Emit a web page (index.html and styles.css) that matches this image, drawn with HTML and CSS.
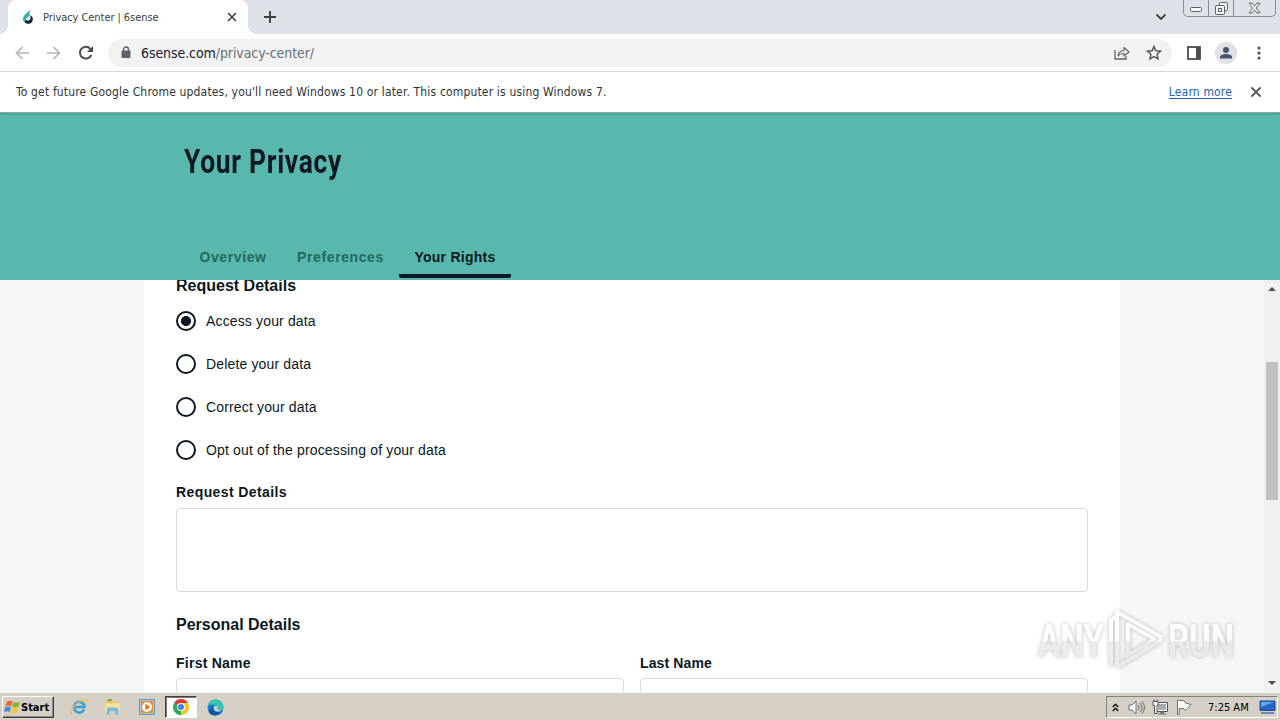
FILE: index.html
```html
<!DOCTYPE html>
<html lang="en">

<head>
  <meta charset="UTF-8">
  <meta name="viewport" content="width=device-width, initial-scale=1.0">
  <title>Privacy Center | 6sense</title>
  <link rel="stylesheet" href="styles.css">
</head>

<body>
  <div class="screen">
    <!-- tab strip -->
    <div class="tabstrip">
      <div class="tab-edge left"></div>
      <div class="tab">
        <svg class="favicon" width="12" height="16" viewBox="0 0 12 16">
          <path d="M8.500 1C4 4 .8 7 1 10.500c.2 1.500 1 2.500 2 3.200C3.300 10 5 8.500 8 6.500 7.300 5 7.500 3 8.500 1z" fill="#31b5a5"/>
          <path d="M3 13.700C5 15.500 9 15 10.300 12.500 11.700 9.500 10.500 7 8 6.500c1 2 .7 3.500-.6 4.500-1.400 1-3 .5-4-.5z" fill="#14213a"/>
        </svg>
        <span class="tab-title">Privacy Center | 6sense</span>
        <svg width="10" height="10" viewBox="0 0 10 10"><path d="M1 1l8 8M9 1L1 9" stroke="#3c4043" stroke-width="1.600"/></svg>
      </div>
      <div class="tab-edge right"></div>
      <svg class="new-tab" width="12" height="12" viewBox="0 0 12 12"><path d="M6 0v12M0 6h12" stroke="#3c4043" stroke-width="1.900"/></svg>
      <svg class="tab-search" width="12" height="8" viewBox="0 0 12 8"><path d="M1.500 1.500L6 6l4.500-4.500" fill="none" stroke="#3c4043" stroke-width="1.800"/></svg>
      <div class="win-buttons">
        <span class="win-btn"><svg width="13" height="6" viewBox="0 0 13 6"><rect x=".5" y=".5" width="11" height="4" rx="1" fill="#f5f6f8" stroke="#5c6068"/></svg></span>
        <span class="win-btn"><svg width="13" height="13" viewBox="0 0 13 13"><g fill="#f2f3f6" stroke="#5c6068"><rect x="4.500" y=".5" width="8" height="8" rx="1"/><rect x=".5" y="3.500" width="9" height="9" rx="1"/><rect x="3.500" y="6.500" width="3" height="3"/></g></svg></span>
        <span class="win-btn close"><svg width="13" height="12" viewBox="0 0 13 12"><path d="M1 1h3l2.500 3L9 1h3L8.300 6l3.700 5H9L6.500 8 4 11H1l3.700-5z" fill="#f5f6f8" stroke="#5c6068"/></svg></span>
      </div>
    </div>

    <!-- toolbar -->
    <div class="toolbar">
      <svg class="back" width="14" height="14" viewBox="0 0 14 14"><path d="M14 7H1.500M7.500 1l-6 6 6 6" fill="none" stroke="#b4b5b7" stroke-width="1.700"/></svg>
      <svg class="forward" width="14" height="14" viewBox="0 0 14 14"><path d="M0 7h12.500M6.500 1l6 6-6 6" fill="none" stroke="#b4b5b7" stroke-width="1.700"/></svg>
      <svg class="reload" width="16" height="16" viewBox="0 0 16 16"><path d="M13.300 10a5.900 5.900 0 1 1-1-6.200L14 5.500" fill="none" stroke="#494c50" stroke-width="2"/><path d="M15 1v6H9z" fill="#494c50"/></svg>
      <div class="omnibox">
        <svg class="lock" width="10" height="13" viewBox="0 0 10 13"><path d="M2.500 5V3.500a2.500 2.500 0 0 1 5 0V5" fill="none" stroke="#5f6368" stroke-width="1.400"/><rect x="0.500" y="4.500" width="9" height="7.500" rx="1" fill="#5f6368"/></svg>
        <span class="url"><b>6sense.com</b>/privacy-center/</span>
        <svg class="share" width="16" height="14" viewBox="0 0 16 14"><path d="M1 4v9h11v-3" fill="none" stroke="#5f6368" stroke-width="1.300"/><path d="M4 10c.4-3.600 2.500-5.300 6-5.500V1.500L15 6l-5 4V7.500C7.500 7.400 5.500 8 4 10z" fill="none" stroke="#5f6368" stroke-width="1.200" stroke-linejoin="round"/></svg>
        <svg class="star" width="16" height="15" viewBox="0 0 16 15"><path d="M8 1.500l1.900 4.200 4.600.5-3.400 3.100.9 4.500L8 11.500l-4 2.300.9-4.500L1.500 6.200l4.600-.5z" fill="none" stroke="#53565a" stroke-width="1.500"/></svg>
      </div>
      <svg class="panel" width="14" height="14" viewBox="0 0 14 14"><rect x="1" y="1" width="12" height="12" fill="#fff" stroke="#4b4e52" stroke-width="1.800"/><path d="M9 1h4v12H9z" fill="#4b4e52"/></svg>
      <svg class="profile" width="22" height="22" viewBox="0 0 22 22"><circle cx="11" cy="11" r="11" fill="#dfe1e5"/><circle cx="11" cy="8" r="3" fill="#47536c"/><path d="M5 16.500v-1.500c0-4 12-4 12 0v1.500z" fill="#47536c"/></svg>
      <svg class="menu" width="4" height="14" viewBox="0 0 4 14"><g fill="#4b4e52"><circle cx="2" cy="2" r="1.600"/><circle cx="2" cy="7" r="1.600"/><circle cx="2" cy="12" r="1.600"/></g></svg>
    </div>

    <!-- update notice -->
    <div class="infobar">
      <span class="notice">To get future Google Chrome updates, you'll need Windows 10 or later. This computer is using Windows 7.</span>
      <a class="learn">Learn more</a>
      <svg width="12" height="12" viewBox="0 0 12 12"><path d="M1.500 1.500l9 9M10.500 1.500l-9 9" stroke="#55585c" stroke-width="1.800"/></svg>
    </div>

    <!-- page -->
    <div class="page-header">
      <h1>Your Privacy</h1>
      <div class="nav">
        <span class="nav-item overview">Overview</span>
        <span class="nav-item preferences">Preferences</span>
        <span class="nav-item rights active">Your Rights</span>
      </div>
    </div>
    <div class="page">
      <div class="card">
        <h2 class="first">Request Details</h2>
        <div class="options">
          <div class="option"><span class="radio checked"></span><span>Access your data</span></div>
          <div class="option"><span class="radio"></span><span>Delete your data</span></div>
          <div class="option"><span class="radio"></span><span>Correct your data</span></div>
          <div class="option"><span class="radio"></span><span>Opt out of the processing of your data</span></div>
        </div>
        <div class="label">Request Details</div>
        <div class="textarea"></div>
        <h2 class="personal">Personal Details</h2>
        <div class="names">
          <div><div class="label first-name">First Name</div><div class="input"></div></div>
          <div><div class="label last-name">Last Name</div><div class="input"></div></div>
        </div>
      </div>
      <div class="scrollbar">
        <svg width="8" height="4" viewBox="0 0 8 4"><path d="M0 4l4-4 4 4z" fill="#505050"/></svg>
        <div class="thumb"></div>
        <svg class="down" width="8" height="4" viewBox="0 0 8 4"><path d="M0 0l4 4 4-4z" fill="#505050"/></svg>
      </div>
    </div>

    <!-- taskbar -->
    <div class="taskbar">
      <div class="start">
        <svg width="17" height="16" viewBox="0 0 17 16">
          <path d="M3 2.500c2-1.300 4-1 5.500 0L7.200 7.300c-2-1-3.500-1-5.700 0z" fill="#ef6429"/>
          <path d="M9.500 3c2 1 4 1 6.500-.3l-1.400 4.800c-2 1.300-4.200 1.200-6.300.2z" fill="#83b735"/>
          <path d="M1.300 8.200c2-1 4-1 5.600 0L5.600 13c-2-1-3.600-1-5.600 0z" fill="#398bdc"/>
          <path d="M8 8.600c2 1 4 1 6.400-.2L13 13.200c-2.300 1.300-4.300 1.200-6.300.2z" fill="#f8c334"/>
        </svg>
        <span>Start</span>
      </div>
      <div class="quick">
        <svg width="18" height="18" viewBox="0 0 18 18">
          <path d="M14 11.500A5.300 5.300 0 1 1 14.500 9H5" fill="none" stroke="#3a9fdd" stroke-width="2.700"/>
          <path d="M2 15.500C-1 18 2 7 11 3c5-2.300 7-1 5 2" fill="none" stroke="#eebd43" stroke-width="1.300"/>
        </svg>
      </div>
      <div class="quick">
        <svg width="18" height="18" viewBox="0 0 18 18">
          <path d="M2 2h6l1 2h6v9H2z" fill="#e5bf60"/>
          <path d="M4 1h4v2H4z" fill="#6fac58"/>
          <path d="M1.500 5h14v8h-14z" fill="#f7e29b"/>
          <path d="M3 16.500V11q0-1.500 1.500-1.500h8q1.500 0 1.500 1.500v5.500h-2.500V13h-6v3.500z" fill="#6dbbe1"/>
        </svg>
      </div>
      <div class="quick">
        <svg width="18" height="18" viewBox="0 0 18 18">
          <rect x="1.500" y="1.500" width="15" height="15" fill="#a6cbe7" stroke="#5e98c5"/>
          <rect x="3" y="3" width="12" height="12" fill="#ee8b23"/>
          <circle cx="9" cy="9" r="5" fill="#fff"/>
          <path d="M7.300 5.800L12.500 9l-5.200 3.200z" fill="#e87512"/>
        </svg>
      </div>
      <div class="quick pressed">
        <svg width="16" height="16" viewBox="0 0 16 16">
          <path d="M8 8l6.930-4A8 8 0 0 1 8 16z" fill="#fcc31e"/>
          <path d="M8 8v8A8 8 0 0 1 1.070 4z" fill="#2da94f"/>
          <path d="M8 4h6.930L11.500 10z" fill="#fcc31e"/>
          <path d="M1.070 4A8 8 0 0 1 14.930 4H8v4z" fill="#e33b2e"/>
          <path d="M11.460 10L8 16V12z" fill="#fcc31e"/>
          <circle cx="8" cy="8" r="4" fill="#fff"/>
          <circle cx="8" cy="8" r="3" fill="#4080ef"/>
        </svg>
      </div>
      <div class="quick">
        <svg width="17" height="17" viewBox="0 0 17 17">
          <circle cx="8.500" cy="8.500" r="8" fill="#1681cc"/>
          <path d="M.8 7C2 1 8-.8 12.500 1.700 16 3.500 17.500 8 15.500 10.500c-2 2-5.500 1-5-1C12 6 5 4 .8 7z" fill="#39c3b1"/>
          <path d="M5.500 8c-.5 5 4 6 9.500 4.300C12 17 5 18 2 13.500 2 10.500 3.500 9 5.500 8z" fill="#0f549d"/>
          <path d="M7 8c1-2 4-1.500 3.500 1-.5 1.500.5 2.700 4 2.500-2 2-8.500 1.500-7.500-3.500z" fill="#d6d1c8"/>
        </svg>
      </div>
      <div class="tray">
        <svg class="chev" width="7" height="9" viewBox="0 0 7 9"><path d="M.8 4L3.500 1.200 6.200 4M.8 8l2.700-2.800L6.200 8" fill="none" stroke="#111" stroke-width="1.400"/></svg>
        <svg class="speaker" width="17" height="15" viewBox="0 0 17 15"><path d="M1 5h3l4-4v13l-4-4H1z" fill="#fff" stroke="#707070"/><path d="M10 5q2 2.500 0 5M12 3q4 4.500 0 9M14 1.500q5 6 0 12" fill="none" stroke="#777" stroke-width="1.100"/></svg>
        <svg class="network" width="17" height="16" viewBox="0 0 17 16"><path d="M4.500 3.500h11v9h-11z" fill="#aaa" stroke="#555"/><path d="M5.500 4.500h9v7h-9z" fill="none" stroke="#fff"/><path d="M8 13h4v1.500h2v1H6v-1h2z" fill="#777"/><path d="M1 2.500h5v4H5v8H2.500v-8H1zM2 .5v2M5 .5v2" fill="#fff" stroke="#555"/></svg>
        <svg class="flag" width="16" height="16" viewBox="0 0 16 16"><path d="M1.500 1v14.500h1.700V9.500h4.500l1 1.500c2-.2 3.300-1.500 6.300-5.500L9.500 4 8.200 1.500H3.200V1z" fill="#fff" stroke="#707070"/></svg>
        <span class="clock">7:25 AM</span>
        <svg width="17" height="14" viewBox="0 0 17 14"><path d="M1 1h15v9.500H1z" fill="#2267c7" stroke="#234e8b"/><path d="M2 2h13L2 7z" fill="#62a7eb"/><path d="M2 13h13" stroke="#4a72aa" stroke-width="1.500"/></svg>
      </div>
    </div>

    <div class="watermark">
      <svg width="210" height="70" viewBox="0 0 210 70">
        <defs>
          <linearGradient id="shade" gradientUnits="userSpaceOnUse" x1="0" y1="0" x2="0" y2="70">
            <stop offset="0.480" stop-color="#fff"/>
            <stop offset="0.520" stop-color="#e6e6e6"/>
          </linearGradient>
        </defs>
        <g class="wm-text">
          <text x="6" y="51" textLength="66" lengthAdjust="spacingAndGlyphs">ANY</text>
          <text x="136" y="51" textLength="66" lengthAdjust="spacingAndGlyphs">RUN</text>
        </g>
        <path class="wm-line" d="M96 48V18l27 15-30 18M85 60V6l44 25-1 4-43 26M85 10l-6 4v46"/>
      </svg>
    </div>
  </div>
</body>

</html>
```
FILE: styles.css
```css
* {
  box-sizing: border-box;
}

body {
  margin: 0;
  overflow: hidden;
  font-family: "Liberation Sans", Arial, sans-serif;
  color: #0b1821;
}

svg {
  display: block;
  flex: none;
}

.screen {
  position: relative;
  width: 1280px;
  height: 720px;
  display: flex;
  flex-direction: column;
  overflow: hidden;
  white-space: nowrap;
}

/* browser window */
.tabstrip,
.toolbar,
.infobar,
.taskbar {
  font-family: "DejaVu Sans Condensed", "DejaVu Sans", sans-serif;
  font-stretch: condensed;
}

.tabstrip {
  flex: none;
  height: 34px;
  display: flex;
  align-items: center;
  background: #dee1e8;
}

.tab-edge {
  align-self: flex-end;
  width: 8px;
  height: 8px;
}

.tab-edge.left {
  background: radial-gradient(circle at 0 0, #dee1e8 7.5px, #fff 8px);
}

.tab-edge.right {
  background: radial-gradient(circle at 8px 0, #dee1e8 7.5px, #fff 8px);
}

.tab {
  width: 240px;
  height: 34px;
  padding: 0 11px 0 14px;
  display: flex;
  align-items: center;
  background: #fff;
  border-radius: 8px 8px 0 0;
}

.tab-title {
  margin-left: 9px;
  width: 184px;
  font-size: 11px;
  letter-spacing: -0.06px;
  color: #3c4043;
}

.new-tab {
  margin-left: 8px;
}

.tab-search {
  margin-left: auto;
}

.win-buttons {
  align-self: flex-start;
  display: flex;
  height: 17px;
  margin: 0 4px 0 16px;
  border: 1px solid #888c94;
  border-top: 0;
  border-radius: 0 0 5px 5px;
}

.win-btn {
  width: 25px;
  display: flex;
  align-items: center;
  justify-content: center;
  border-right: 1px solid #888c94;
}

.win-btn:first-child {
  padding-top: 4px;
}

.win-btn.close {
  width: 41px;
  border: 0;
}

.toolbar {
  flex: none;
  height: 38px;
  display: flex;
  align-items: center;
  padding: 0 19px 0 15px;
  background: #fff;
  border-bottom: 1px solid #d5d7da;
}

.forward {
  margin-left: 18px;
}

.reload {
  margin-left: 17px;
}

.omnibox {
  flex: 1;
  height: 28px;
  margin-left: 14px;
  padding: 0 10px 0 13px;
  display: flex;
  align-items: center;
  background: #f0f2f4;
  border-radius: 14px;
}

.url {
  margin-left: 10px;
  font-size: 14px;
  letter-spacing: -0.08px;
  color: #6a6e73;
}

.url b {
  font-weight: normal;
  color: #202124;
}

.share {
  margin-left: auto;
}

.star {
  margin-left: 16px;
}

.panel {
  margin-left: 15px;
}

.profile {
  margin-left: 14px;
}

.menu {
  margin-left: 20px;
}

.infobar {
  flex: none;
  height: 41px;
  display: flex;
  align-items: center;
  padding: 0 18px 1px 16px;
  background: #fff;
  border-bottom: 1px solid #7fa9a3;
  font-size: 12px;
  letter-spacing: 0.165px;
  color: #303236;
}

.learn {
  margin-left: auto;
  margin-right: 18px;
  color: #1c63b5;
  text-decoration: underline;
  text-underline-offset: 2px;
}

/* page */
.page-header {
  flex: none;
  height: 167px;
  padding: 28px 184px 0;
  background: #58b8ad;
  box-shadow: inset 0 2px 1px #50a49a;
}

h1 {
  margin: 0;
  width: max-content;
  font: bold 33px/42px Roboto, sans-serif;
  letter-spacing: 0.9px;
  transform: scaleX(0.8);
  transform-origin: left;
}

.nav {
  display: flex;
  margin-top: 54px;
}

.nav-item {
  height: 41px;
  text-align: center;
  line-height: 41px;
  font-size: 14px;
  font-weight: bold;
  letter-spacing: 0.6px;
  color: #24695f;
}

.overview {
  width: 98px;
}

.preferences {
  width: 117px;
}

.rights {
  width: 112px;
  letter-spacing: 0.25px;
}

.nav-item.active {
  color: #0b1821;
  border-bottom: 4px solid #0b1821;
  border-radius: 2px;
}

.page {
  flex: none;
  height: 412px;
  display: flex;
  justify-content: space-between;
  padding-left: 144px;
  background: #f6f6f6;
  overflow: hidden;
}

.card {
  width: 976px;
  padding: 0 32px;
  background: #fff;
}

h2 {
  margin: 0;
  font-size: 16px;
  line-height: 20px;
  font-weight: bold;
}

.first {
  margin-top: -4px;
}

.options {
  display: flex;
  flex-direction: column;
  gap: 23px;
  margin-top: 15px;
}

.option {
  display: flex;
  align-items: center;
  gap: 10px;
  height: 20px;
  font-size: 14px;
  letter-spacing: 0.15px;
}

.radio {
  width: 20px;
  height: 20px;
  border: 2px solid #0b1821;
  border-radius: 50%;
}

.radio.checked {
  background: radial-gradient(circle, #0b1821 4.7px, #fff 5.3px);
}

.label {
  font-size: 14px;
  line-height: 20px;
  font-weight: bold;
  letter-spacing: 0.4px;
}

.label.first-name {
  letter-spacing: 0.25px;
}

.label.last-name {
  letter-spacing: 0.12px;
}

.options + .label {
  margin-top: 22px;
}

.textarea,
.input {
  border: 1px solid #d8d9da;
  border-radius: 4px;
}

.textarea {
  height: 84px;
  margin-top: 6px;
}

.personal {
  margin-top: 23px;
}

.names {
  display: grid;
  grid-template-columns: 1fr 1fr;
  gap: 16px;
  margin-top: 18px;
}

.input {
  height: 40px;
  margin-top: 5px;
}

.scrollbar {
  width: 16px;
  display: flex;
  flex-direction: column;
  align-items: center;
  padding: 7px 0;
  background: #f1f1f1;
}

.thumb {
  width: 12px;
  height: 138px;
  margin-top: 71px;
  background: #c1c1c1;
}

.down {
  margin-top: auto;
}

/* taskbar */
.taskbar {
  flex: 1;
  display: flex;
  align-items: center;
  padding: 1px 2px 0;
  background: #d5cfc6;
  border-top: 1px solid #f5f3ef;
  color: #000;
}

.start {
  width: 52px;
  height: 22px;
  margin-right: 9px;
  padding-left: 1px;
  display: flex;
  align-items: center;
  border: 1px solid;
  border-color: #fff #404040 #404040 #fff;
  box-shadow: inset -1px -1px #888;
  font-size: 11px;
  font-weight: bold;
}

.quick {
  width: 32px;
  height: 22px;
  margin-right: 2px;
  display: flex;
  align-items: center;
  justify-content: center;
}

.quick.pressed {
  background: #fff;
  border: 1px solid;
  border-color: #404040 #fff #fff #404040;
  box-shadow: inset 1px 1px #777;
}

.tray {
  width: 172px;
  height: 22px;
  margin-left: auto;
  padding: 0 1px 0 5px;
  display: flex;
  align-items: center;
  border: 1px solid;
  border-color: #808080 #fff #fff #808080;
}

.speaker {
  margin-left: 9px;
}

.network {
  margin-left: 7px;
}

.flag {
  margin-left: 7px;
}

.clock {
  margin-left: 16px;
  margin-right: auto;
  font-size: 11px;
}

/* translucent logo over the page */
.watermark {
  position: absolute;
  left: 1032px;
  top: 606px;
  opacity: 0.75;
  filter: drop-shadow(0 0 2px #aaa);
}

.wm-text {
  font: bold 46px Roboto, sans-serif;
  fill: url(#shade);
}

.wm-line {
  fill: none;
  stroke: url(#shade);
  stroke-width: 4;
  stroke-linejoin: round;
}
```
